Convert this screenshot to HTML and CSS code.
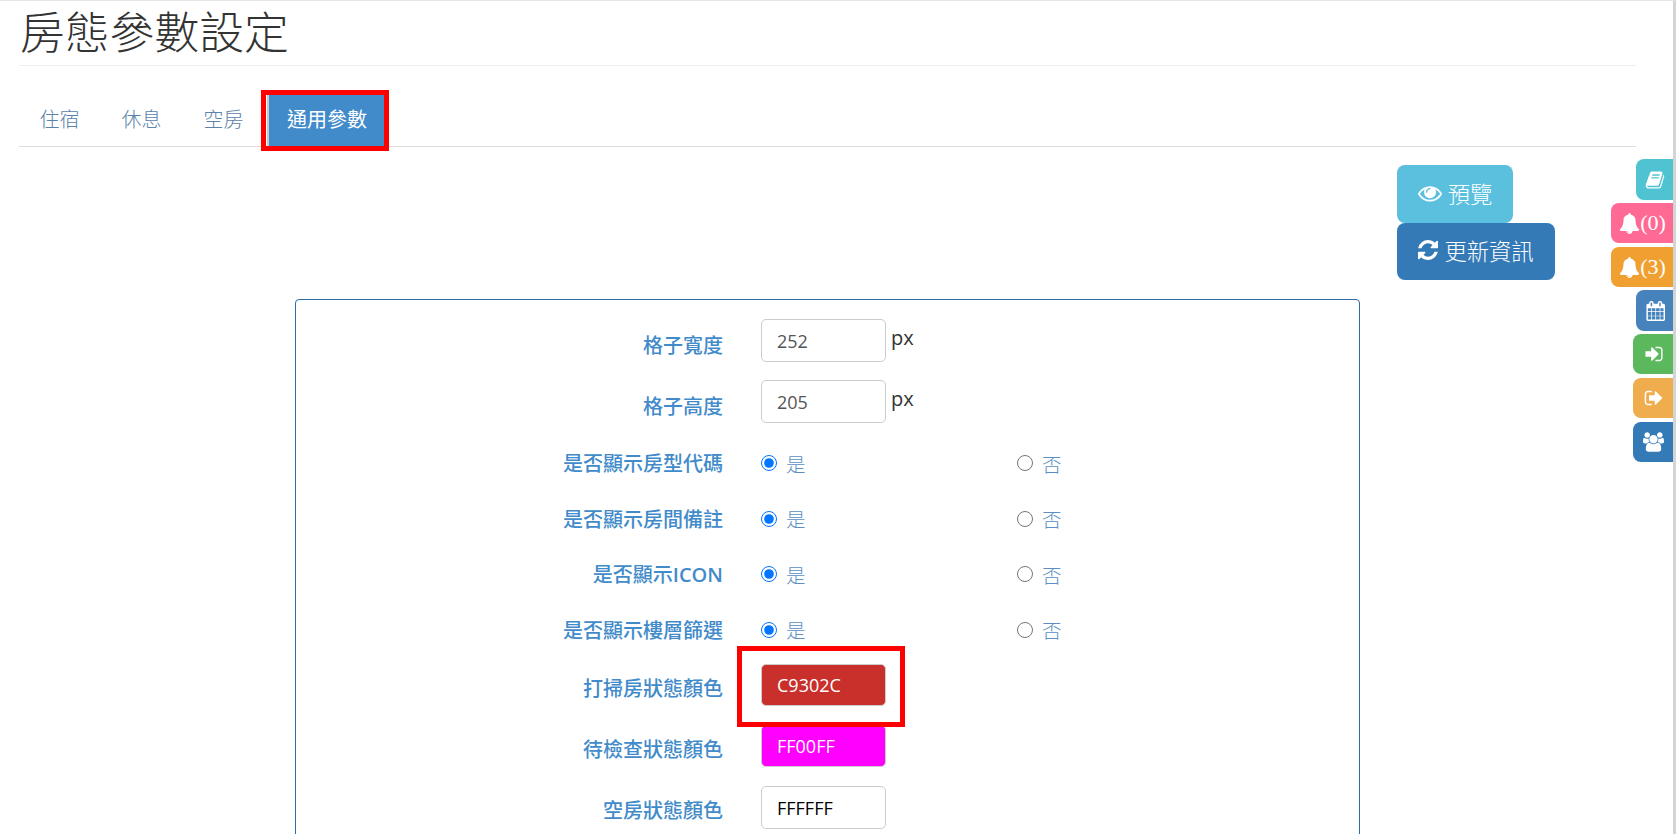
FILE: index.html
```html
<!DOCTYPE html>
<html lang="zh-Hant">
<head>
<meta charset="utf-8">
<title>房態參數設定</title>
<link rel="stylesheet" href="styles.css">
</head>
<body>
<div class="page">
  <h1 class="title">房態參數設定</h1>
  <nav class="tabs">
    <a class="tab">住宿</a>
    <a class="tab">休息</a>
    <a class="tab">空房</a>
    <a class="tab active">通用參數<span class="mark mark-tab"></span></a>
  </nav>
  <div class="actions">
    <button class="btn btn-info"><svg class="btn-icon" viewBox="0 0 1792 1792"><path fill="#fff" d="M1664 960q-152-236-381-353 61 104 61 225 0 185-131.500 316.500t-316.500 131.500-316.500-131.500-131.500-316.500q0-121 61-225-229 117-381 353 133 205 333.500 326.500t434.500 121.500 434.500-121.500 333.500-326.500zm-720-384q0-20-14-34t-34-14q-125 0-214.500 89.500t-89.500 214.500q0 20 14 34t34 14 34-14 14-34q0-86 61-147t147-61q20 0 34-14t14-34zm848 384q0 34-20 69-140 230-376.500 368.500t-499.500 138.500-499.500-139-376.500-368q-20-35-20-69t20-69q140-229 376.500-368t499.500-139 499.500 139 376.500 368q20 35 20 69z"/></svg>預覽</button>
    <button class="btn btn-primary"><svg class="btn-icon sync" viewBox="128 128 1536 1536"><path fill="#fff" d="M1639 1056q0 5-1 7-64 268-268 434.500t-478 166.500q-146 0-282.500-55t-243.500-157l-129 129q-19 19-45 19t-45-19-19-45v-448q0-26 19-45t45-19h448q26 0 45 19t19 45-19 45l-137 137q71 66 161 102t187 36q134 0 250-65t186-179q11-17 53-117 8-23 30-23h192q13 0 22.500 9.500t9.500 22.500zm25-800v448q0 26-19 45t-45 19h-448q-26 0-45-19t-19-45 19-45l138-138q-148-137-349-137-134 0-250 65t-186 179q-11 17-53 117-8 23-30 23h-199q-13 0-22.500-9.500t-9.500-22.500v-7q65-268 270-434.500t480-166.500q146 0 284 55.500t245 156.500l130-129q19-19 45-19t45 19 19 45z"/></svg>更新資訊</button>
  </div>
  <form class="panel">
    <div class="row row-input">
      <label class="row-label">格子寬度</label>
      <input class="field" value="252"><span class="unit">px</span>
    </div>
    <div class="row row-input">
      <label class="row-label">格子高度</label>
      <input class="field" value="205"><span class="unit">px</span>
    </div>
    <div class="row row-radio">
      <label class="row-label">是否顯示房型代碼</label>
      <label class="choice"><input type="radio" name="a" checked>是</label>
      <label class="choice"><input type="radio" name="a">否</label>
    </div>
    <div class="row row-radio">
      <label class="row-label">是否顯示房間備註</label>
      <label class="choice"><input type="radio" name="b" checked>是</label>
      <label class="choice"><input type="radio" name="b">否</label>
    </div>
    <div class="row row-radio">
      <label class="row-label">是否顯示<span class="latin">ICON</span></label>
      <label class="choice"><input type="radio" name="c" checked>是</label>
      <label class="choice"><input type="radio" name="c">否</label>
    </div>
    <div class="row row-radio">
      <label class="row-label">是否顯示樓層篩選</label>
      <label class="choice"><input type="radio" name="d" checked>是</label>
      <label class="choice"><input type="radio" name="d">否</label>
    </div>
    <div class="row row-color">
      <label class="row-label">打掃房狀態顏色</label>
      <div class="field-wrap"><input class="field swatch red" value="C9302C"><span class="mark mark-color"></span></div>
    </div>
    <div class="row row-color">
      <label class="row-label">待檢查狀態顏色</label>
      <div class="field-wrap"><input class="field swatch magenta" value="FF00FF"></div>
    </div>
    <div class="row row-color">
      <label class="row-label">空房狀態顏色</label>
      <div class="field-wrap"><input class="field swatch white" value="FFFFFF"></div>
    </div>
  </form>
  <aside class="side">
    <a class="side-btn s-book"><svg viewBox="0 0 1792 1792"><path fill="#fff" d="M1703 478q40 57 18 129l-275 906q-19 64-76.500 107.500t-122.500 43.500h-923q-77 0-148.500-53.500t-99.500-131.500q-24-67-2-127 0-4 3-27t4-37q1-8-3-21.500t-3-19.500q2-11 8-21t16.500-23.500 16.500-23.500q23-38 45-91.500t30-91.500q3-10 .5-30t-.5-28q3-11 17-28t17-23q21-36 42-92t25-90q1-9-2.500-32t.5-28q4-13 22-30.500t22-22.500q19-26 42.500-84.500t27.500-96.500q1-8-3-25.500t-2-26.500q2-8 9-18t18-23 17-21q8-12 16.500-30.500t15-35 16-36 19.500-32 26.500-23.500 36-11.500 47.500 5.500l-1 3q38-9 51-9h761q74 0 114 56t18 130l-274 906q-36 119-71.500 153.500t-128.500 34.500h-869q-27 0-38 15-11 16-1 43 24 70 144 70h923q29 0 56-15.500t35-41.500l300-987q7-22 5-57 38 15 59 43zm-1064 2q-4 13 2 22.500t20 9.500h608q13 0 25.500-9.500t16.500-22.500l21-64q4-13-2-22.500t-20-9.500h-608q-13 0-25.500 9.500t-16.500 22.500zm-83 256q-4 13 2 22.500t20 9.500h608q13 0 25.500-9.500t16.500-22.500l21-64q4-13-2-22.500t-20-9.500h-608q-13 0-25.500 9.500t-16.500 22.500z"/></svg></a>
    <a class="side-btn s-pink"><svg class="bell" viewBox="0 0 1792 1792"><path fill="#fff" d="M912 1696q0-16-16-16-59 0-101.500-42.500t-42.500-101.500q0-16-16-16t-16 16q0 73 51.500 124.500t124.500 51.500q16 0 16-16zm816-288q0 52-38 90t-90 38h-448q0 106-75 181t-181 75-181-75-75-181h-448q-52 0-90-38t-38-90q50-42 91-88t85-119.500 74.500-158.500 50-206 19.500-260q0-152 117-282.500t307-158.500q-8-19-8-39 0-40 28-68t68-28 68 28 28 68q0 20-8 39 190 28 307 158.500t117 282.500q0 139 19.500 260t50 206 74.500 158.500 85 119.500 91 88z"/></svg>(0)</a>
    <a class="side-btn s-orange"><svg class="bell" viewBox="0 0 1792 1792"><path fill="#fff" d="M912 1696q0-16-16-16-59 0-101.500-42.500t-42.500-101.500q0-16-16-16t-16 16q0 73 51.500 124.500t124.500 51.500q16 0 16-16zm816-288q0 52-38 90t-90 38h-448q0 106-75 181t-181 75-181-75-75-181h-448q-52 0-90-38t-38-90q50-42 91-88t85-119.500 74.500-158.500 50-206 19.500-260q0-152 117-282.500t307-158.500q-8-19-8-39 0-40 28-68t68-28 68 28 28 68q0 20-8 39 190 28 307 158.500t117 282.500q0 139 19.500 260t50 206 74.500 158.500 85 119.500 91 88z"/></svg>(3)</a>
    <a class="side-btn s-cal"><svg viewBox="0 0 1664 1792"><path fill="#fff" d="M192 1664h288v-288h-288v288zm352 0h320v-288h-320v288zm-352-352h288v-320h-288v320zm352 0h320v-320h-320v320zm-352-384h288v-288h-288v288zm736 736h320v-288h-320v288zm-384-736h320v-288h-320v288zm768 736h288v-288h-288v288zm-384-352h320v-320h-320v320zm-352-864v-288q0-13-9.500-22.500t-22.500-9.500h-64q-13 0-22.500 9.500t-9.500 22.500v288q0 13 9.500 22.500t22.500 9.500h64q13 0 22.500-9.500t9.500-22.500zm736 864h288v-320h-288v320zm-384-384h320v-288h-320v288zm384 0h288v-288h-288v288zm32-480v-288q0-13-9.500-22.500t-22.500-9.500h-64q-13 0-22.500 9.500t-9.500 22.500v288q0 13 9.500 22.500t22.500 9.500h64q13 0 22.500-9.500t9.500-22.500zm384-64v1280q0 52-38 90t-90 38h-1408q-52 0-90-38t-38-90v-1280q0-52 38-90t90-38h128v-96q0-66 47-113t113-47h64q66 0 113 47t47 113v96h384v-96q0-66 47-113t113-47h64q66 0 113 47t47 113v96h128q52 0 90 38t38 90z"/></svg></a>
    <a class="side-btn s-green"><svg viewBox="0 0 1792 1792"><path fill="#fff" d="M1312 896q0 26-19 45l-544 544q-19 19-45 19t-45-19-19-45v-288h-448q-26 0-45-19t-19-45v-384q0-26 19-45t45-19h448v-288q0-26 19-45t45-19 45 19l544 544q19 19 19 45zm352-352v704q0 119-84.500 203.500t-203.500 84.500h-320q-13 0-22.500-9.500t-9.500-22.500q0-4-1-20t-.5-26.500 3-23.500 10-19.500 20.500-6.500h320q66 0 113-47t47-113v-704q0-66-47-113t-113-47h-312l-11.500-1-11.500-3-8-5.500-7-9-2-13.500q0-4-1-20t-.5-26.500 3-23.500 10-19.500 20.500-6.500h320q119 0 203.500 84.500t84.500 203.500z"/></svg></a>
    <a class="side-btn s-amber"><svg viewBox="0 0 1792 1792"><path fill="#fff" d="M704 1440q0 4 1 20t.5 26.500-3 23.500-10 19.500-20.500 6.500h-320q-119 0-203.500-84.500t-84.500-203.500v-704q0-119 84.500-203.500t203.500-84.500h320q13 0 22.500 9.500t9.500 22.500q0 4 1 20t.5 26.500-3 23.500-10 19.500-20.500 6.500h-320q-66 0-113 47t-47 113v704q0 66 47 113t113 47h312l11.500 1 11.500 3 8 5.500 7 9 2 13.500zm928-544q0 26-19 45l-544 544q-19 19-45 19t-45-19-19-45v-288h-448q-26 0-45-19t-19-45v-384q0-26 19-45t45-19h448v-288q0-26 19-45t45-19 45 19l544 544q19 19 19 45z"/></svg></a>
    <a class="side-btn s-blue"><svg class="users" viewBox="0 0 1920 1792"><path fill="#fff" d="M593 896q-162 5-265 128h-134q-82 0-138-40.500t-56-118.500q0-353 124-353 6 0 43.500 21t97.500 42.500 119 21.500q67 0 133-23-5 37-5 66 0 139 81 256zm1071 637q0 120-73 189.500t-194 69.500h-874q-121 0-194-69.500t-73-189.500q0-53 3.500-103.500t14-109 26.500-108.500 43-97.500 62-81 85.500-53.500 111.500-20q10 0 43 21.500t73 48 107 48 135 21.500 135-21.500 107-48 73-48 43-21.500q61 0 111.500 20t85.500 53.500 62 81 43 97.500 26.500 108.500 14 109 3.500 103.500zm-1024-1277q0 106-75 181t-181 75-181-75-75-181 75-181 181-75 181 75 75 181zm704 384q0 159-112.500 271.500t-271.500 112.500-271.500-112.500-112.500-271.500 112.500-271.500 271.500-112.500 271.500 112.500 112.500 271.500zm576 225q0 78-56 118.500t-138 40.500h-134q-103-123-265-128 81-117 81-256 0-29-5-66 66 23 133 23 59 0 119-21.500t97.500-42.500 43.500-21q124 0 124 353zm-128-609q0 106-75 181t-181 75-181-75-75-181 75-181 181-75 181 75 75 181z"/></svg></a>
  </aside>
</div>
</body>
</html>
```

FILE: styles.css
```css
* { box-sizing: border-box; }
html, body { margin: 0; height: 834px; overflow: hidden; background: #fff; }
body { font-family: "Open Sans", "Noto Sans CJK TC", sans-serif; color: #333; }
.page { position: relative; height: 834px; border-top: 1px solid #e6e6e6; border-right: 3px solid #d4d4d4; padding: 0 37px 0 19px; }
.title { margin: 0; height: 65px; border-bottom: 1px solid #eee; font-family: "Noto Sans CJK TC", sans-serif; font-weight: 300; font-size: 44.800px; line-height: 57px; color: #333; padding-left: 1px; }
.tabs { display: flex; margin-top: 29px; height: 52px; border-bottom: 1px solid #ddd; }
.tab { position: relative; height: 51px; margin-right: 3px; padding: 0 20px; font-family: "Noto Sans CJK TC", sans-serif; font-size: 20px; line-height: 48px; color: #5b82aa; font-weight: 300; }
.tab:nth-child(-n+3) { width: 79px; margin-right: 3px; padding: 0 0 0 2px; text-align: center; }
.tab.active { margin-left: 2px; width: 118px; padding: 0; text-align: center; background: #428bca; color: #fff; border-left: 2px solid #ccc; font-weight: 400; line-height: 47px; }
.mark { position: absolute; border: 5px solid #f00; pointer-events: none; }
.mark-tab { left: -8px; top: -5px; width: 128px; height: 61px; }
.actions { display: flex; flex-direction: column; align-items: flex-start; margin: 18px 0 0 1378px; height: 134px; }
.btn { display: flex; align-items: center; justify-content: center; height: 58px; border: 0; border-radius: 8px; color: #fff; font-family: "Noto Sans CJK TC", sans-serif; font-size: 22.300px; font-weight: 300; padding: 0 0 3px; }
.btn-info { width: 116px; background: #5bc0de; height: 58px; }
.btn-primary { width: 158px; background: #337ab7; height: 57px; }
.btn-icon { width: 24px; height: 24px; margin-right: 6px; }
.btn-icon.sync { width: 20px; height: 20px; margin-right: 6px; }
.panel { margin-left: 276px; width: 1065px; height: 560px; border: 1px solid #2e6da4; border-radius: 4px; padding-top: 19px; }
.row { display: flex; }
.row-label { width: 427px; margin-right: 38px; text-align: right; font-family: "Noto Sans CJK TC", sans-serif; font-size: 20px; font-weight: 500; color: #428bca; line-height: 26px; }
.latin { font-family: "Open Sans", sans-serif; font-weight: 600; }
.row-input { height: 61px; }
.row-input .row-label { padding-top: 13px; }
.row-radio { height: 55.500px; align-items: flex-start; }
.row-radio:nth-child(3) { margin-top: -8px; }
.row-radio .row-label { padding-top: 17px; }
.row-color { height: 61px; }
.row-color:nth-child(7) { margin-top: 9px; }
.row-color .row-label { padding-top: 11px; }
.field { display: block; width: 125px; height: 43px; border: 1px solid #ccc; border-radius: 5px; padding: 0 15px; font-family: "Open Sans", "Noto Sans", sans-serif; font-size: 18px; color: #555; outline: 0; background: #fff; }
.unit { font-size: 20px; line-height: 26px; margin: 6px 0 0 5px; color: #333; }
.field-wrap { position: relative; width: 125px; }
.swatch { height: 42px; }
.swatch.red { background: #c9302c; color: #fff; }
.swatch.magenta { background: #f0f; color: #fff; }
.swatch.white { background: #fff; color: #000; height: 43px; }
.mark-color { left: -24px; top: -18px; width: 168px; height: 81px; z-index: 1; }
.choice { display: flex; align-items: center; width: 256px; height: 30px; margin-top: 15px; font-family: "Noto Sans CJK TC", sans-serif; font-size: 19.500px; font-weight: 300; color: #5b8fc4; }
.choice input { width: 16px; height: 16px; margin: 0 9px 0 0; accent-color: #0075ff; }
.side { position: absolute; right: 0; top: 158px; display: flex; flex-direction: column; align-items: flex-end; gap: 3px; }
.side-btn { display: flex; align-items: center; justify-content: center; height: 40px; width: 40px; border-radius: 8px 0 0 8px; color: #fff; font-family: "Liberation Serif", serif; font-size: 22px; padding-left: 1px; }
.side-btn svg { width: 20px; height: 20px; }
.side-btn svg.bell { width: 21px; height: 21px; }
.side-btn svg.users { width: 21px; height: 20px; }
.s-book { width: 37px; height: 41px; background: #4fc3d2; }
.s-pink { width: 62px; background: #ff6a95; }
.s-orange { width: 62px; background: #f0a030; margin-top: 1px; }
.s-cal { width: 37px; height: 41px; background: #4682bb; }
.s-green { background: #5cb85c; }
.s-amber { background: #f0ad4e; margin-top: 1px; }
.s-blue { background: #337ab7; margin-top: 1px; }
```
